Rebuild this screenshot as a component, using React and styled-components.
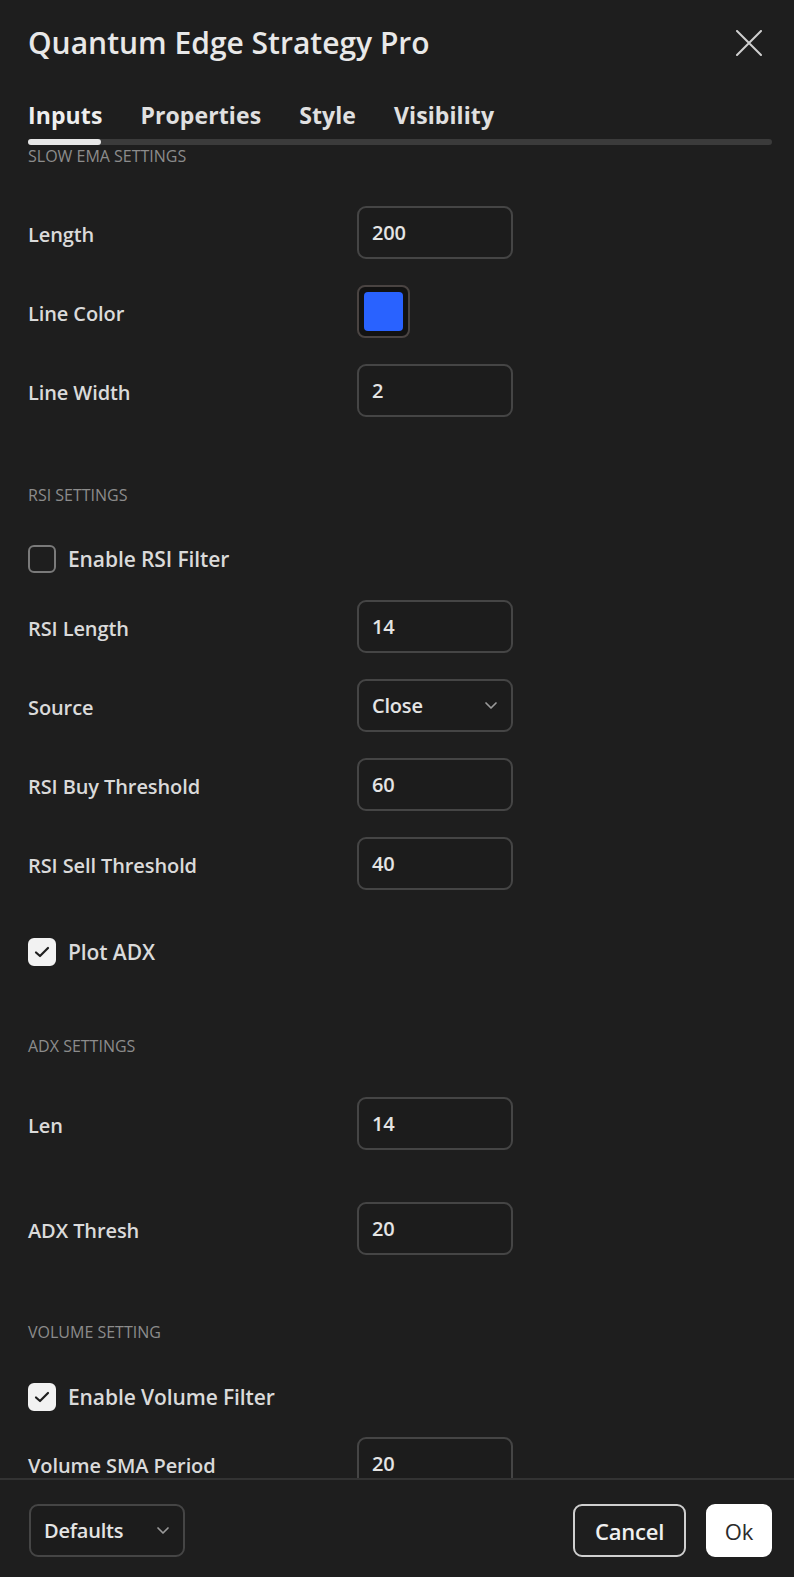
import React from 'react';
import styled, { createGlobalStyle } from 'styled-components';

const GlobalStyle = createGlobalStyle`
    html, body {
        margin: 0;
        padding: 0;
        background: #1e1e1e;
    }
    * {
        box-sizing: border-box;
    }
`;

const Dialog = styled.div`
    display: flex;
    flex-direction: column;
    height: 100vh;
    background: #1e1e1e;
    color: #dcdcdc;
    font-family: 'Open Sans', 'Noto Sans', sans-serif;
    overflow: hidden;
`;

const Header = styled.div`
    display: flex;
    align-items: center;
    justify-content: space-between;
    height: 36px;
    margin-top: 25px;
    padding: 0 32px 0 28px;
`;

const Title = styled.h1`
    margin: 0;
    font-size: 30px;
    font-weight: 600;
    line-height: 36px;
    color: #e8e8e8;
`;

const CloseButton = styled.button`
    display: flex;
    padding: 0;
    border: none;
    background: none;
    color: #cfcfcf;
    cursor: pointer;
`;

const Tabs = styled.div`
    display: flex;
    gap: 38px;
    margin-top: 40px;
    padding-left: 28px;
`;

const Tab = styled.div`
    font-size: 23px;
    font-weight: 700;
    line-height: 28px;
    color: ${props => props.$active ? '#eeeeee' : '#e0e0e0'};
    letter-spacing: 0.1px;
`;

const TabTrack = styled.div`
    display: flex;
    height: 6px;
    margin: 10px 22px 0 28px;
    border-radius: 3px;
    background: #3b3b3b;
`;

const TabIndicator = styled.div`
    width: 73px;
    height: 100%;
    border-radius: 3px;
    background: #e6e6e6;
`;

const Body = styled.div`
    flex: 1;
    overflow: hidden;
    padding: 0 22px 0 28px;
`;

const SectionTitle = styled.div`
    margin-top: ${props => props.$gap}px;
    font-size: 16px;
    line-height: 16px;
    color: #8c8c8c;
    text-transform: uppercase;
`;

const FieldRow = styled.div`
    display: grid;
    grid-template-columns: 329px 156px;
    align-items: center;
    height: 53px;
    margin-top: ${props => props.$gap}px;
`;

const Label = styled.span`
    padding-top: ${props => props.$offset || 0}px;
    font-size: ${props => props.$size || 20}px;
    font-weight: 600;
    color: #dadada;
    letter-spacing: -0.1px;
`;

const Field = styled.div`
    display: flex;
    align-items: center;
    justify-content: space-between;
    width: ${props => props.$width || 156}px;
    height: 53px;
    padding: 0 13px 0 13px;
    border: 2px solid #454545;
    border-radius: 9px;
    background: #1c1c1c;
    font-size: 20px;
    font-weight: 600;
    color: #e4e4e4;
    letter-spacing: -0.2px;
`;

const Swatch = styled.div`
    display: flex;
    width: 53px;
    height: 53px;
    padding: 5px;
    border: 2px solid #4a4442;
    border-radius: 8px;
    background: #121212;
`;

const SwatchColor = styled.div`
    flex: 1;
    border-radius: 4px;
    background: ${props => props.$color};
`;

const CheckRow = styled.label`
    display: flex;
    align-items: center;
    gap: 12px;
    height: 30px;
    margin-top: ${props => props.$gap}px;
`;

const Box = styled.span`
    display: flex;
    align-items: center;
    justify-content: center;
    width: 28px;
    height: 28px;
    border: 2px solid ${props => props.$checked ? '#f2f2f2' : '#7a7a7a'};
    border-radius: 6px;
    background: ${props => props.$checked ? '#f2f2f2' : 'transparent'};
`;

const Footer = styled.div`
    display: flex;
    align-items: flex-start;
    justify-content: space-between;
    height: 99px;
    padding: 24px 22px 0 29px;
    border-top: 2px solid #333333;
`;

const Actions = styled.div`
    display: flex;
    gap: 20px;
`;

const Button = styled.button`
    height: 53px;
    padding: 0;
    width: ${props => props.$width}px;
    border: 2px solid ${props => props.$primary ? '#ffffff' : '#cfcfcf'};
    border-radius: 9px;
    background: ${props => props.$primary ? '#ffffff' : 'transparent'};
    color: ${props => props.$primary ? '#2b2b2b' : '#f0f0f0'};
    font-family: 'Open Sans', 'Noto Sans', sans-serif;
    font-size: 22px;
    font-weight: ${props => props.$primary ? 400 : 600};
    letter-spacing: -0.2px;
`;

const Chevron = () => (
    <svg width="14" height="9" viewBox="0 0 14 9" fill="none">
        <path d="M2 2 L7 7 L12 2" stroke="#9a9a9a" strokeWidth="1.7" strokeLinecap="round" strokeLinejoin="round" />
    </svg>
);

const CloseIcon = () => (
    <svg width="26" height="26" viewBox="0 0 26 26" fill="none">
        <path d="M1 1 L25 25 M25 1 L1 25" stroke="currentColor" strokeWidth="2" strokeLinecap="round" />
    </svg>
);

const CheckMark = () => (
    <svg width="16" height="12" viewBox="0 0 16 12" fill="none">
        <path d="M2 6.5 L6 10 L14 2" stroke="#1e1e1e" strokeWidth="2.2" strokeLinecap="round" strokeLinejoin="round" />
    </svg>
);

const Input = ({ label, value, gap }) => (
    <FieldRow $gap={gap}>
        <Label $offset={3}>{label}</Label>
        <Field>{value}</Field>
    </FieldRow>
);

const Select = ({ label, value, gap }) => (
    <FieldRow $gap={gap}>
        <Label $offset={3}>{label}</Label>
        <Field>
            {value}
            <Chevron />
        </Field>
    </FieldRow>
);

const Checkbox = ({ label, checked, gap }) => (
    <CheckRow $gap={gap}>
        <Box $checked={checked}>{checked && <CheckMark />}</Box>
        <Label $size={21}>{label}</Label>
    </CheckRow>
);

export default function App() {
    return (
        <Dialog>
            <GlobalStyle />
            <Header>
                <Title>Quantum Edge Strategy Pro</Title>
                <CloseButton><CloseIcon /></CloseButton>
            </Header>
            <Tabs>
                <Tab $active>Inputs</Tab>
                <Tab>Properties</Tab>
                <Tab>Style</Tab>
                <Tab>Visibility</Tab>
            </Tabs>
            <TabTrack>
                <TabIndicator />
            </TabTrack>

            <Body>
                <SectionTitle $gap={3}>Slow EMA Settings</SectionTitle>
                <Input label="Length" value="200" gap={42} />
                <FieldRow $gap={26}>
                    <Label $offset={3}>Line Color</Label>
                    <Swatch>
                        <SwatchColor $color="#2962ff" />
                    </Swatch>
                </FieldRow>
                <Input label="Line Width" value="2" gap={26} />

                <SectionTitle $gap={70}>RSI Settings</SectionTitle>
                <Checkbox label="Enable RSI Filter" gap={41} />
                <Input label="RSI Length" value="14" gap={26} />
                <Select label="Source" value="Close" gap={26} />
                <Input label="RSI Buy Threshold" value="60" gap={26} />
                <Input label="RSI Sell Threshold" value="40" gap={26} />
                <Checkbox label="Plot ADX" checked gap={47} />

                <SectionTitle $gap={71}>ADX Settings</SectionTitle>
                <Input label="Len" value="14" gap={43} />
                <Input label="ADX Thresh" value="20" gap={52} />

                <SectionTitle $gap={69}>Volume Setting</SectionTitle>
                <Checkbox label="Enable Volume Filter" checked gap={42} />
                <Input label="Volume SMA Period" value="20" gap={25} />
            </Body>

            <Footer>
                <Field $width={156}>
                    Defaults
                    <Chevron />
                </Field>
                <Actions>
                    <Button $width={113}>Cancel</Button>
                    <Button $width={66} $primary>Ok</Button>
                </Actions>
            </Footer>
        </Dialog>
    );
}
